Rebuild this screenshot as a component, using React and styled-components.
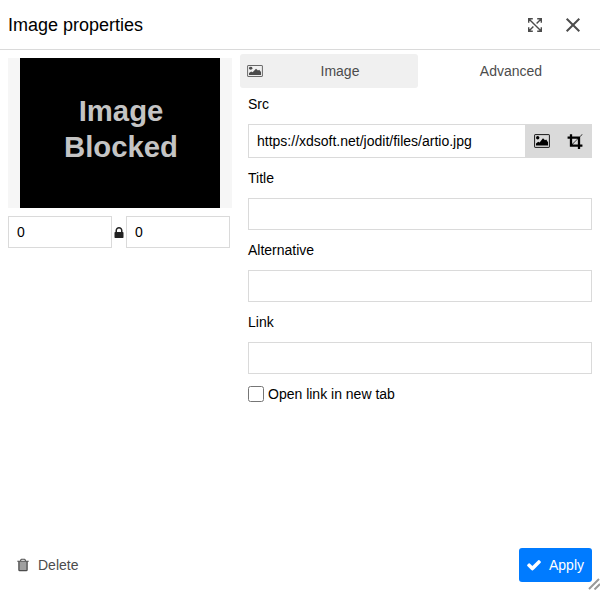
import React from "react";
import styled, { createGlobalStyle } from "styled-components";

const GlobalStyle = createGlobalStyle`
  *, *::before, *::after { box-sizing: border-box; }
  body { margin: 0; background: #fff; }
`;

const Dialog = styled.div`
  position: relative;
  display: flex;
  flex-direction: column;
  width: 600px;
  height: 590px;
  overflow: hidden;
  background: #fff;
  color: #000;
  font: 14px/20px "Liberation Sans", Arial, sans-serif;
`;

const Header = styled.header`
  display: flex;
  align-items: center;
  justify-content: space-between;
  height: 50px;
  flex: none;
  padding: 0 10px 0 8px;
  border-bottom: 1px solid #dadada;
`;

const Heading = styled.h1`
  margin: 0;
  font-size: 18px;
  line-height: 24px;
  font-weight: 400;
`;

const HeaderActions = styled.div`
  display: flex;
  gap: 4px;
`;

const IconButton = styled.button`
  display: flex;
  align-items: center;
  justify-content: center;
  width: ${(p) => p.$width || 34}px;
  height: 34px;
  padding: 0;
  border: 0;
  background: transparent;
  color: ${(p) => p.$color || "#4c4c4c"};
`;

const Svg = styled.svg`
  display: block;
  flex: none;
  overflow: visible;
  width: ${(p) => p.$size || 14}px;
  height: ${(p) => p.$size || 14}px;
  fill: currentColor;
`;

const PictureSvg = styled.svg`
  display: block;
  flex: none;
  width: 16px;
  height: ${(p) => p.$height}px;
  margin: 0 -1px;
  fill: currentColor;
`;

const Body = styled.main`
  display: grid;
  grid-template-columns: 240px 360px;
  flex: 1;
`;

const PreviewColumn = styled.section`
  padding: 8px;
`;

const Preview = styled.div`
  display: flex;
  justify-content: center;
  height: 150px;
  margin-bottom: 8px;
  background: #f6f6f6;
`;

const BlockedImage = styled.div`
  display: flex;
  flex-direction: column;
  align-items: center;
  justify-content: center;
  width: 200px;
  padding: 0 0 9px 2px;
  background: #000;
  color: #c4c4c4;
  font-size: 29.3px;
  line-height: 36px;
  font-weight: 700;
`;

const Sizes = styled.div`
  display: grid;
  grid-template-columns: 104px 14px 104px;
  align-items: center;
`;

const LockCell = styled.span`
  display: flex;
  justify-content: center;
  padding-top: 2px;
  color: #222;
`;

const Input = styled.input`
  width: 100%;
  min-width: 0;
  height: ${(p) => p.$height || 32}px;
  padding: 0 8px;
  border: 1px solid #dadada;
  border-radius: 0;
  outline: 0;
  background: #fff;
  color: #000;
  font: inherit;
`;

const TabStrip = styled.nav`
  display: flex;
  gap: 4px;
  padding-top: 4px;
`;

const Tab = styled.button`
  display: flex;
  align-items: center;
  width: 178px;
  height: 34px;
  padding: 0 8px;
  border: 0;
  border-radius: 3px;
  background: ${(p) => (p.$active ? "#f0f0f0" : "transparent")};
  color: #4c4c4c;
  font: inherit;
`;

const TabText = styled.span`
  flex: 1;
  padding-left: ${(p) => (p.$withIcon ? 8 : 0)}px;
  text-align: center;
`;

const Fields = styled.div`
  display: flex;
  flex-direction: column;
  gap: 10px;
  padding: 6px 8px 0;
`;

const Field = styled.label`
  display: flex;
  flex-direction: column;
  gap: 10px;
`;

const SourceGroup = styled.div`
  display: flex;
`;

const SourceActions = styled.div`
  display: flex;
  flex: none;
  width: 66px;
  background: #dadada;
`;

const CheckRow = styled.label`
  display: flex;
  align-items: center;
  gap: 4px;
`;

const Checkbox = styled.input`
  width: 16px;
  height: 16px;
  margin: 0;
`;

const Footer = styled.footer`
  display: flex;
  justify-content: space-between;
  flex: none;
  padding: 8px;
`;

const Button = styled.button`
  display: flex;
  align-items: center;
  gap: ${(p) => (p.$primary ? 7 : 8)}px;
  height: 34px;
  padding: 0 8px 0 ${(p) => (p.$primary ? 7 : 8)}px;
  border: 0;
  border-radius: 3px;
  background: ${(p) => (p.$primary ? "#007bff" : "transparent")};
  color: ${(p) => (p.$primary ? "#fff" : "#4c4c4c")};
  font: inherit;
`;

const ResizeGrip = styled.svg`
  position: absolute;
  right: 0;
  bottom: 0;
  width: 12px;
  height: 12px;
  fill: none;
  stroke: #999;
  stroke-width: 2;
`;

const paths = {
  crop:
    "M621 1280h595v-595zm-45-45l595-595h-595v595zm1152 77v192q0 14-9 23t-23 9h-224v224q0 14-9 23t-23 9h-192q-14 0-23-9t-9-23v-224h-864q-14 0-23-9t-9-23v-864h-224q-14 0-23-9t-9-23v-192q0-14 9-23t23-9h224v-224q0-14 9-23t23-9h192q14 0 23 9t9 23v224h851l246-247q10-9 23-9t23 9q9 10 9 23t-9 23l-247 246v851h224q14 0 23 9t9 23z",
  lock:
    "M640 768h512v-192q0-106-75-181t-181-75-181 75-75 181v192zm832 96v576q0 40-28 68t-68 28h-960q-40 0-68-28t-28-68v-576q0-40 28-68t68-28h32v-192q0-184 132-316t316-132 316 132 132 316v192h32q40 0 68 28t28 68z",
  check:
    "M1671 566q0 40-28 68l-724 724-136 136q-28 28-68 28t-68-28l-136-136-362-362q-28-28-28-68t28-68l136-136q28-28 68-28t68 28l294 295 656-657q28-28 68-28t68 28l136 136q28 28 28 68z",
};

function Icon({ name, size }) {
  return (
    <Svg viewBox="0 0 1792 1792" $size={size} aria-hidden="true">
      <path d={paths[name]} />
    </Svg>
  );
}

function PictureIcon({ height }) {
  return (
    <PictureSvg viewBox="0 0 16 14" preserveAspectRatio="none" $height={height} aria-hidden="true">
      <rect x=".6" y=".6" width="14.8" height="12.8" rx=".5" fill="none" stroke="currentColor" strokeWidth=".9" />
      <circle cx="3.7" cy="3.8" r="1.7" />
      <path d="M2 11.6V9.4l2.2-1.7L5.6 8.5 9 4.3l2 2 1.2-.7L14 8.2v3.4z" />
    </PictureSvg>
  );
}

function ExpandIcon() {
  return (
    <Svg viewBox="0 0 14 14" aria-hidden="true">
      <path
        d="M.7 4.8V.7h4.1M9.2.7h4.1v4.1M13.3 9.2v4.1H9.2M4.8 13.3H.7V9.2M.7.7l12.6 12.6M13.3.7 8.6 5.4M.7 13.3l4.7-4.7"
        fill="none"
        stroke="currentColor"
        strokeWidth="1.4"
      />
    </Svg>
  );
}

function CloseIcon() {
  return (
    <Svg viewBox="0 0 14 14" aria-hidden="true">
      <path d="m.7.7 12.6 12.6M13.3.7.7 13.3" fill="none" stroke="currentColor" strokeWidth="2" />
    </Svg>
  );
}

function BinIcon() {
  return (
    <Svg viewBox="0 0 14 14" aria-hidden="true">
      <path d="M3 3.5h8v9H3z" fill="#a0a0a0" />
      <path d="M1.3 3.2h11.4M4.7 3V1.9l.8-.7h3l.8.7V3" fill="none" stroke="currentColor" strokeWidth="1.1" />
      <path
        d="M2.9 3.3v8.4q0 .9.8.9h6.6q.8 0 .8-.9V3.3"
        fill="none"
        stroke="currentColor"
        strokeWidth="1.3"
      />
    </Svg>
  );
}

export default function App() {
  return (
    <>
      <GlobalStyle />
      <Dialog role="dialog" aria-label="Image properties">
        <Header>
          <Heading>Image properties</Heading>
          <HeaderActions>
            <IconButton aria-label="Full size"><ExpandIcon /></IconButton>
            <IconButton aria-label="Close"><CloseIcon /></IconButton>
          </HeaderActions>
        </Header>
        <Body>
          <PreviewColumn>
            <Preview>
              <BlockedImage>
                <span>Image</span>
                <span>Blocked</span>
              </BlockedImage>
            </Preview>
            <Sizes>
              <Input defaultValue="0" aria-label="Width" />
              <LockCell><Icon name="lock" /></LockCell>
              <Input defaultValue="0" aria-label="Height" />
            </Sizes>
          </PreviewColumn>
          <section>
            <TabStrip>
              <Tab $active>
                <PictureIcon height={12} />
                <TabText $withIcon>Image</TabText>
              </Tab>
              <Tab><TabText>Advanced</TabText></Tab>
            </TabStrip>
            <Fields>
              <Field as="div">
                <span>Src</span>
                <SourceGroup>
                  <Input $height={34} defaultValue="https://xdsoft.net/jodit/files/artio.jpg" aria-label="Src" />
                  <SourceActions>
                    <IconButton $color="#000" $width={32} aria-label="Browse"><PictureIcon height={14} /></IconButton>
                    <IconButton $color="#000" $width={34} aria-label="Crop"><Icon name="crop" size={16} /></IconButton>
                  </SourceActions>
                </SourceGroup>
              </Field>
              <Field><span>Title</span><Input /></Field>
              <Field><span>Alternative</span><Input /></Field>
              <Field><span>Link</span><Input /></Field>
              <CheckRow>
                <Checkbox type="checkbox" />
                <span>Open link in new tab</span>
              </CheckRow>
            </Fields>
          </section>
        </Body>
        <Footer>
          <Button><BinIcon />Delete</Button>
          <Button $primary><Icon name="check" size={16} />Apply</Button>
        </Footer>
        <ResizeGrip viewBox="0 0 12 12" aria-hidden="true">
          <path d="M1 11 11 1M6.5 11.5 12 6" />
        </ResizeGrip>
      </Dialog>
    </>
  );
}
